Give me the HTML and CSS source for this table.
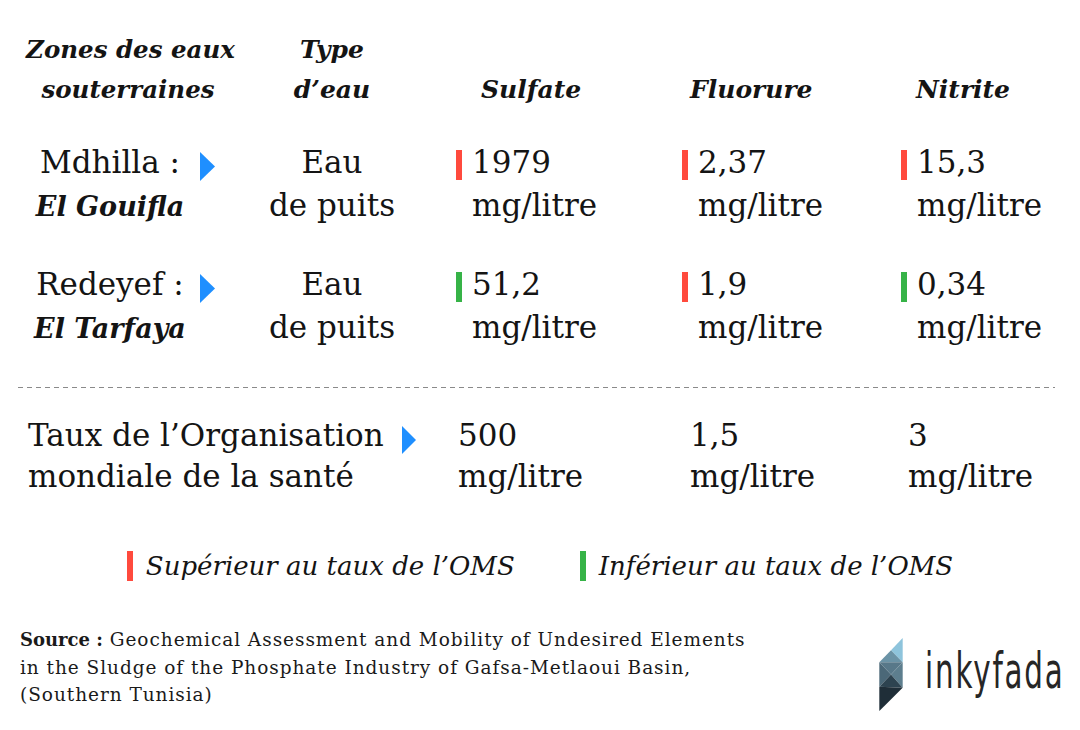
FILE: index.html
```html
<!DOCTYPE html>
<html lang="fr">
<head>
<meta charset="utf-8">
<link rel="stylesheet" href="styles.css">
</head>
<body>
<div class="page">
  <div class="row head">
    <div class="h h-zone">Zones des eaux<br>souterraines</div>
    <div class="h h-type">Type<br>d’eau</div>
    <div class="h h-sulf">Sulfate</div>
    <div class="h h-fluo">Fluorure</div>
    <div class="h h-nitr">Nitrite</div>
  </div>

  <div class="row data">
    <div class="zone">
      <div class="zname">Mdhilla :<br><span class="place">El Gouifla</span></div>
      <svg class="arrow" width="15" height="29" viewBox="0 0 15 29"><polygon points="0,0 15,14.5 0,29"/></svg>
    </div>
    <div class="type">Eau<br>de puits</div>
    <div class="val c3"><span class="bar red"></span><span class="num">1979<br>mg/litre</span></div>
    <div class="val c4"><span class="bar red"></span><span class="num">2,37<br>mg/litre</span></div>
    <div class="val c5"><span class="bar red"></span><span class="num">15,3<br>mg/litre</span></div>
  </div>

  <div class="row data second">
    <div class="zone">
      <div class="zname">Redeyef :<br><span class="place">El Tarfaya</span></div>
      <svg class="arrow" width="15" height="29" viewBox="0 0 15 29"><polygon points="0,0 15,14.5 0,29"/></svg>
    </div>
    <div class="type">Eau<br>de puits</div>
    <div class="val c3"><span class="bar green"></span><span class="num">51,2<br>mg/litre</span></div>
    <div class="val c4"><span class="bar red"></span><span class="num">1,9<br>mg/litre</span></div>
    <div class="val c5"><span class="bar green"></span><span class="num">0,34<br>mg/litre</span></div>
  </div>

  <div class="sep"></div>

  <div class="row oms">
    <div class="omslabel">
      <span class="omstext">Taux de l’Organisation<br>mondiale de la santé</span>
      <svg class="arrow" width="14" height="28" viewBox="0 0 14 28"><polygon points="0,0 14,14 0,28"/></svg>
    </div>
    <div class="oval o3">500<br>mg/litre</div>
    <div class="oval o4">1,5<br>mg/litre</div>
    <div class="oval o5">3<br>mg/litre</div>
  </div>

  <div class="legend">
    <div class="litem"><span class="bar red"></span><span>Supérieur au taux de l’OMS</span></div>
    <div class="litem"><span class="bar green"></span><span>Inférieur au taux de l’OMS</span></div>
  </div>

  <div class="footer">
    <p class="source"><b>Source :</b> Geochemical Assessment and Mobility of Undesired Elements<br>in the Sludge of the Phosphate Industry of Gafsa-Metlaoui Basin,<br>(Southern Tunisia)</p>
    <div class="logo">
      <svg class="mark" width="24" height="73" viewBox="0 0 23 72">
        <polygon points="23,0 11.5,12 23,24" fill="#8ec4dc"/>
        <polygon points="11.5,12 0,24 23,24" fill="#6b93a6"/>
        <polygon points="0,24 23,24 11.5,36" fill="#587889"/>
        <polygon points="0,24 11.5,36 0,48" fill="#4b6878"/>
        <polygon points="23,24 23,49 11.5,36" fill="#5d7e8e"/>
        <polygon points="0,48 11.5,36 23,49" fill="#2d4350"/>
        <polygon points="0,48 23,49 0,72" fill="#1f2e38"/>
      </svg>
      <span class="logotext">inkyfada</span>
    </div>
  </div>
</div>
</body>
</html>
```

FILE: styles.css
```css
html, body {
  margin: 0;
  padding: 0;
  background: #ffffff;
}

body {
  font-family: "DejaVu Serif", "Liberation Serif", serif;
  color: #141414;
  width: 1080px;
  height: 730px;
  overflow: hidden;
}

.page {
  padding-top: 30px;
}

.row {
  display: grid;
  grid-template-columns: 230px 204px 248px 219px 1fr;
}

/* header */
.head {
  align-items: end;
}

.h {
  font-weight: 700;
  font-style: italic;
  font-size: 25px;
  line-height: 40px;
  white-space: nowrap;
}

.h-zone {
  text-align: center;
  padding-left: 26px;
  font-size: 24.5px;
}

.h-type {
  text-align: center;
}

.h-sulf {
  padding-left: 47px;
}

.h-fluo {
  padding-left: 8px;
}

.h-nitr {
  padding-left: 15px;
}

/* data rows */
.data {
  margin-top: 31px;
  font-size: 31px;
  line-height: 43px;
}

.data.second {
  margin-top: 35px;
}

.zone {
  display: flex;
  align-items: flex-start;
}

.zname {
  width: 180px;
  padding-left: 20px;
  text-align: center;
  white-space: nowrap;
}

.place {
  font-weight: 700;
  font-style: italic;
  font-size: 27px;
}

.arrow {
  fill: #1f8fff;
  flex: none;
  margin-top: 11px;
}

.type {
  text-align: center;
}

.val {
  display: flex;
  align-items: flex-start;
}

.c3 {
  padding-left: 22px;
}

.bar {
  display: inline-block;
  width: 6px;
  height: 30px;
  flex: none;
}

.val .bar {
  margin-top: 9px;
}

.num {
  margin-left: 10px;
  white-space: nowrap;
}

.red {
  background: #ff4a3d;
}

.green {
  background: #36b347;
}

/* separator */
.sep {
  margin: 37px 25px 0 18px;
  height: 1px;
  background: repeating-linear-gradient(to right, #8a8a8a 0 5px, transparent 5px 9px);
}

/* OMS row */
.oms {
  margin-top: 27px;
  font-size: 31px;
  line-height: 41px;
}

.omslabel {
  grid-column: span 2;
  display: flex;
  align-items: flex-start;
  padding-left: 28px;
}

.omstext {
  white-space: nowrap;
}

.omslabel .arrow {
  margin-left: 18px;
  margin-top: 11px;
}

.oval {
  white-space: nowrap;
}

.o3 {
  padding-left: 24px;
}

.o4 {
  padding-left: 8px;
}

.o5 {
  padding-left: 7px;
}

/* legend */
.legend {
  margin-top: 49px;
  display: flex;
  justify-content: center;
  gap: 65px;
  font-style: italic;
  font-size: 26px;
  line-height: 40px;
}

.litem {
  display: flex;
  align-items: center;
  gap: 13px;
}

/* footer */
.footer {
  margin-top: 38px;
  display: flex;
  justify-content: space-between;
  align-items: center;
  padding: 0 18px 0 20px;
}

.source {
  margin: 0;
  font-size: 18.5px;
  line-height: 27.5px;
  letter-spacing: 0.95px;
  color: #1a1a1a;
}

.source b {
  font-size: 18px;
  letter-spacing: 0;
}

.logo {
  display: flex;
  align-items: center;
  gap: 22px;
  margin-top: 14px;
}

.mark {
  display: block;
}

.logotext {
  display: inline-block;
  width: 137px;
  white-space: nowrap;
  font-family: "DejaVu Sans", "Liberation Sans", sans-serif;
  font-size: 49px;
  font-weight: 400;
  color: #262626;
  letter-spacing: 3px;
  line-height: 1;
  transform: scaleX(0.6);
  transform-origin: left center;
  padding-bottom: 6px;
}
```
